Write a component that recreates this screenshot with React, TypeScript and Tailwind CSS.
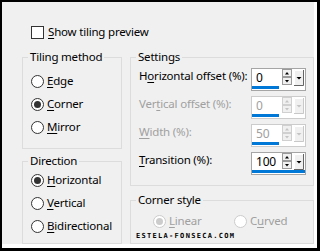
import React from "react";

type Accel = [string, string, string];

const Label = ({ t }: { t: Accel }) => (
  <span className="whitespace-nowrap">
    {t[0]}
    <u className="underline-offset-[2px]">{t[1]}</u>
    {t[2]}
  </span>
);

const Radio = ({ checked, disabled }: { checked?: boolean; disabled?: boolean }) => (
  <span
    className={`flex h-[13px] w-[13px] shrink-0 items-center justify-center rounded-full border bg-white ${
      disabled ? "border-[#cccccc]" : "border-[#333333]"
    }`}
  >
    {checked && (
      <span className={`h-[7px] w-[7px] rounded-full ${disabled ? "bg-[#cccccc]" : "bg-[#333333]"}`} />
    )}
  </span>
);

const RadioRow = ({ label, checked, disabled }: { label: Accel; checked?: boolean; disabled?: boolean }) => (
  <div className={`flex h-[16px] items-center gap-[3px] ${disabled ? "text-[#a0a0a0]" : "text-black"}`}>
    <Radio checked={checked} disabled={disabled} />
    <Label t={label} />
  </div>
);

const SpinButtons = ({ disabled }: { disabled?: boolean }) => {
  const arrow = disabled ? "#c4c4c4" : "#000000";
  const edge = disabled ? "#d0d0d0" : "#9a9a9a";
  return (
    <svg width="24" height="17" viewBox="0 0 24 17" className="shrink-0">
      <rect x="1.5" y="0.5" width="9" height="7" fill="#f0f0f0" stroke={edge} />
      <polygon points="4,5.5 8,5.5 6,3" fill={arrow} />
      <rect x="1.5" y="8.5" width="9" height="7" fill="#f0f0f0" stroke={edge} />
      <polygon points="4,11 8,11 6,13.5" fill={arrow} />
      <rect x="13" y="1" width="10" height="16" fill="#f0f0f0" />
      <path d="M13.5 17V1.5H22.5" stroke="#ffffff" fill="none" />
      <path d="M13 16.5H22.5V1" stroke={disabled ? "#c8c8c8" : "#646464"} fill="none" />
      <polygon points="15.5,8 20.5,8 18,10.5" fill={arrow} />
    </svg>
  );
};

const SpinBox = ({ value, full, disabled }: { value: string; full?: boolean; disabled?: boolean }) => (
  <div
    className={`flex h-[23px] w-[55px] shrink-0 flex-col border bg-white ${
      disabled ? "border-[#cccccc]" : "border-[#a5a5a5]"
    }`}
  >
    <div className="flex h-[17px]">
      <span className={`flex-1 pl-[4px] text-[12px] leading-[17px] ${disabled ? "text-[#a0a0a0]" : "text-black"}`}>
        {value}
      </span>
      <SpinButtons disabled={disabled} />
    </div>
    <div className={`mb-[1px] mt-auto h-[3px] bg-[#0078d7] ${full ? "w-full" : "w-[27px]"}`} />
  </div>
);

const SettingRow = ({ label, value, full, disabled }: { label: Accel; value: string; full?: boolean; disabled?: boolean }) => (
  <div className="flex h-[23px] items-start">
    <span className={`min-w-0 flex-1 leading-[16px] ${disabled ? "text-[#a0a0a0]" : "text-black"}`}>
      <Label t={label} />
    </span>
    <SpinBox value={value} full={full} disabled={disabled} />
  </div>
);

const Group = ({ title, className, children }: { title: string; className: string; children: React.ReactNode }) => (
  <fieldset className={`min-w-0 border border-[#dcdcdc] p-0 ${className}`}>
    <legend className="ml-[5px] px-[2px] leading-[16px] text-black">{title}</legend>
    {children}
  </fieldset>
);

export default function App() {
  return (
    <div className="h-[251px] w-[320px] border-b-[3px] border-l-2 border-r-[3px] border-t-2 border-black font-['Noto_Sans',sans-serif] text-[11.5px] tracking-[-0.2px]">
      <div className="h-full border-b-[4px] border-r-[3px] border-white bg-[#f0f0f0] pl-[20px] pt-[22px]">
        <div className="flex h-[16px] items-center gap-[4px] pl-[9px]">
          <span className="h-[13px] w-[13px] border border-[#333333] bg-white" />
          <Label t={["", "S", "how tiling preview"]} />
        </div>

        <div className="mt-[9px] flex gap-[8px]">
          <div className="flex w-[100px] flex-col gap-[4px]">
            <Group title="Tiling method" className="h-[100px]">
              <div className="flex flex-col gap-[7px] pl-[8px] pt-[8px]">
                <RadioRow label={["", "E", "dge"]} />
                <RadioRow label={["", "C", "orner"]} checked />
                <RadioRow label={["", "M", "irror"]} />
              </div>
            </Group>
            <Group title="Direction" className="h-[91px]">
              <div className="flex flex-col gap-[7px] pl-[8px] pt-[3px]">
                <RadioRow label={["", "H", "orizontal"]} checked />
                <RadioRow label={["", "V", "ertical"]} />
                <RadioRow label={["", "B", "idirectional"]} />
              </div>
            </Group>
          </div>

          <div className="flex w-[184px] flex-col gap-[6px]">
            <Group title="Settings" className="h-[137px]">
              <div className="flex flex-col gap-[5px] pl-[8px] pr-[7px] pt-[3px]">
                <SettingRow label={["H", "o", "rizontal offset (%):"]} value="0" />
                <SettingRow label={["Ver", "t", "ical offset (%):"]} value="0" disabled />
                <SettingRow label={["", "W", "idth (%):"]} value="50" disabled />
                <SettingRow label={["", "T", "ransition (%):"]} value="100" full />
              </div>
            </Group>
            <Group title="Corner style" className="h-[52px]">
              <div className="flex pl-[22px] pt-[5px]">
                <div className="w-[81px]">
                  <RadioRow label={["", "L", "inear"]} checked disabled />
                </div>
                <RadioRow label={["C", "u", "rved"]} disabled />
              </div>
              <div className="mt-[4px] pl-[5px] font-['DejaVu_Sans_Mono',monospace] text-[7px] font-bold leading-[7px] tracking-[1.3px] text-black">
                ESTELA-FONSECA.COM
              </div>
            </Group>
          </div>
        </div>
      </div>
    </div>
  );
}
